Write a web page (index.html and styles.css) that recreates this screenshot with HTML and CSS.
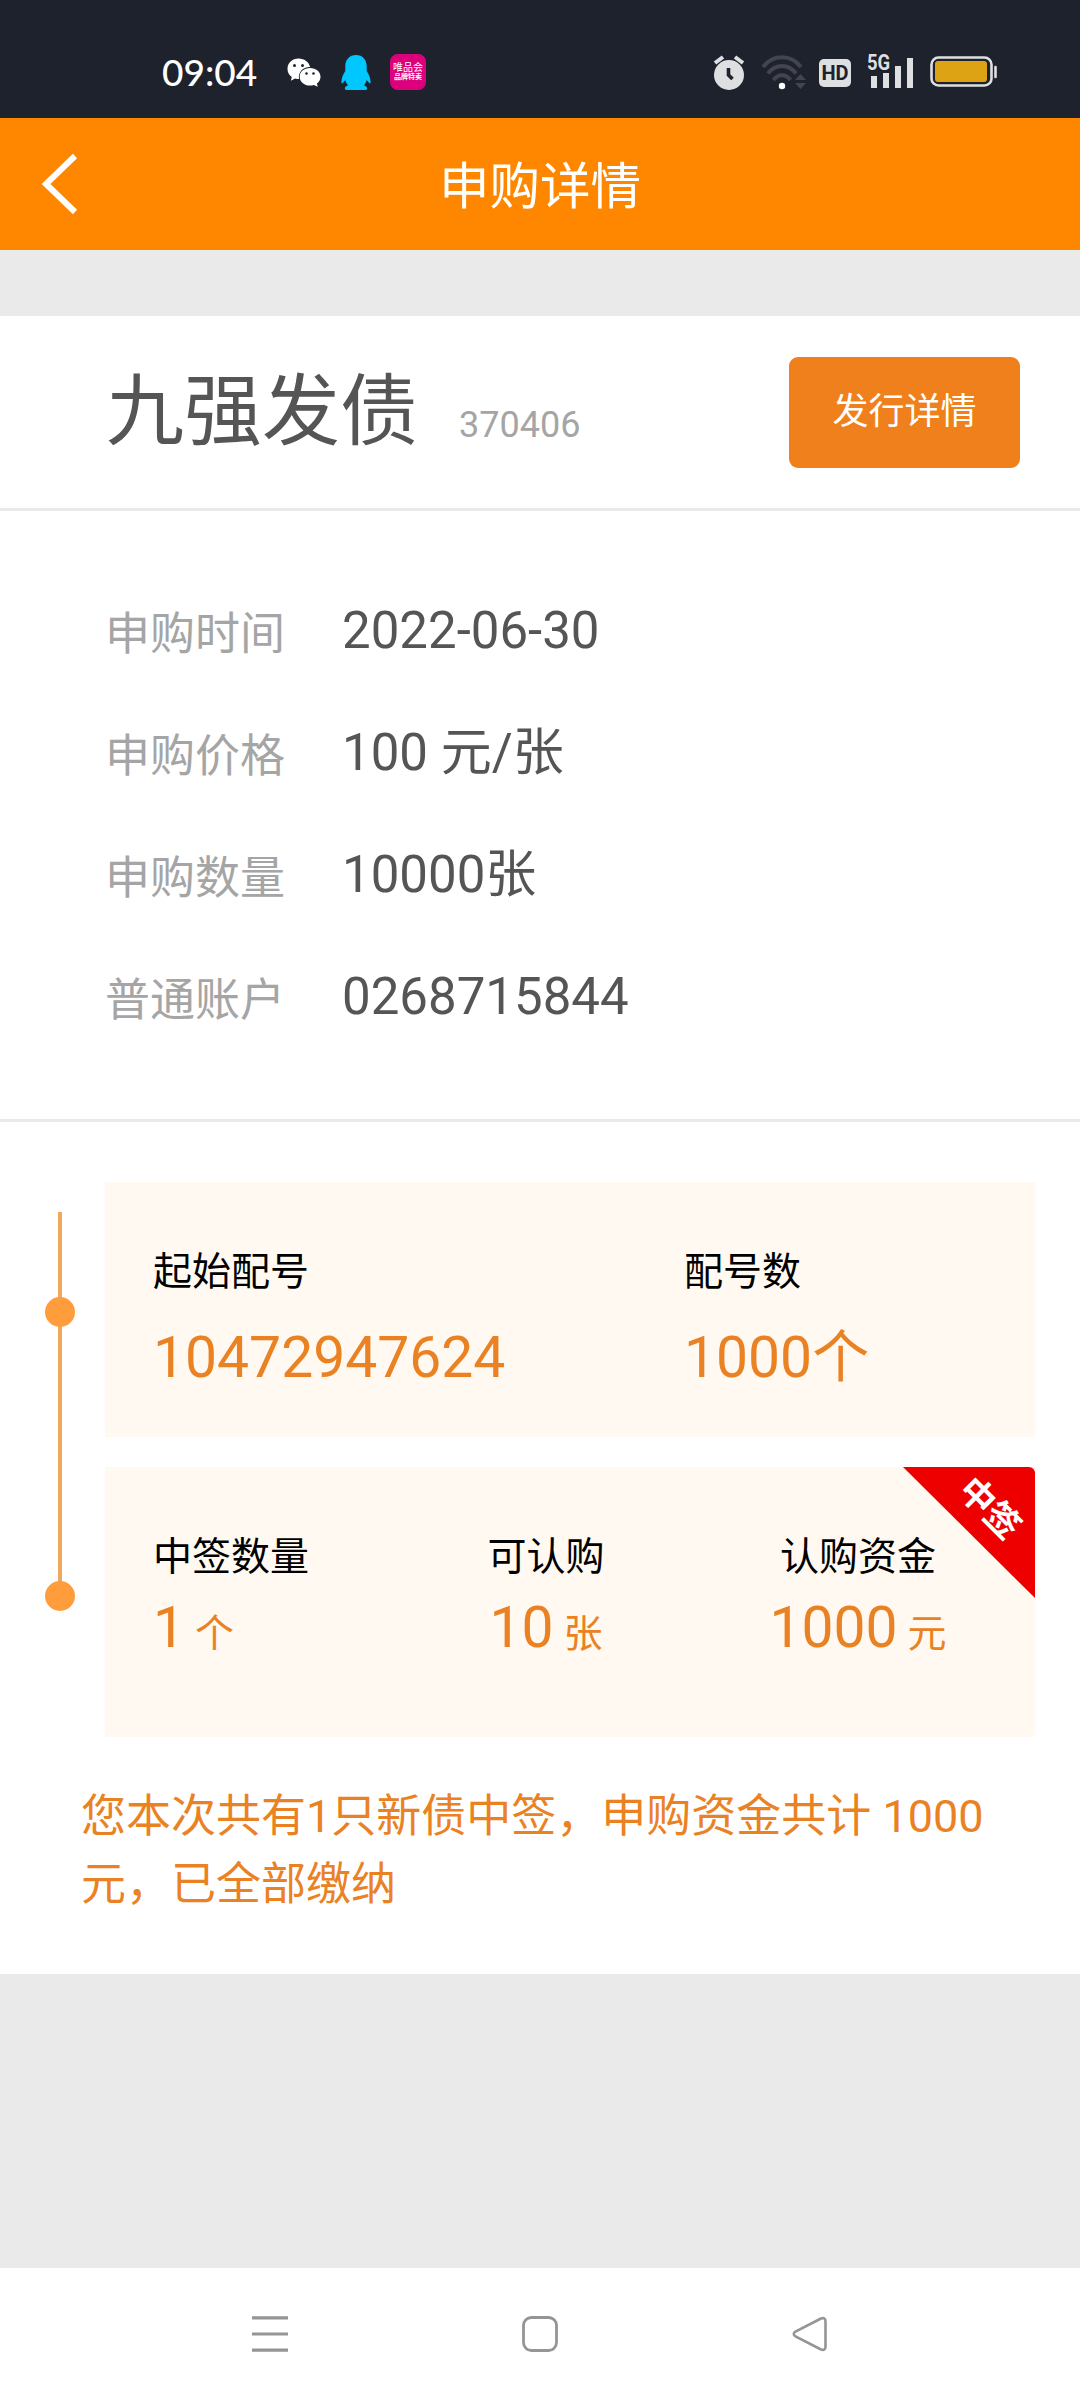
FILE: index.html
```html
<!DOCTYPE html>
<html lang="zh-CN">
<head>
<meta charset="utf-8">
<title>申购详情</title>
<link rel="stylesheet" href="styles.css">
</head>
<body>
<div class="status">
  <span class="clock">09:04</span>
  <svg class="wechat" width="34" height="29" viewBox="0 0 34 29"><path fill="#fff" d="M11.500 0.500C5.200 0.500 0.500 5 0.500 11c0 3.500 1.800 6.300 4.300 8l-1 3.700 4.300-2.200c1.300.4 2.600.6 4 .6-1.400-6.600 4-12.300 11-12.100C22 4 17.300.5 11.500.5z"/><path fill="#fff" d="M23 10c-6 0-10.300 3.900-10.300 8.700 0 5 4.300 8.800 10.300 8.800 1.400 0 2.600-.2 3.800-.6l4 1.800-.9-3.200c2.300-1.600 3.600-4 3.600-6.800C33.500 13.900 29 10 23 10z"/><g fill="#1e222d"><circle cx="7.500" cy="7.500" r="1.500"/><circle cx="15.500" cy="7.500" r="1.500"/><circle cx="19.500" cy="15.500" r="1.300"/><circle cx="26.500" cy="15.500" r="1.300"/></g></svg>
  <svg class="qq" width="30" height="35" viewBox="0 0 30 35"><path fill="#00c8ff" d="M15 0C8.500 0 4.300 4.800 4.300 11v5C2 19.500.3 23.500.4 27.300c.1 1.800 1 1.600 3.900-2.300.5 2 1.300 3.600 2.700 5.200-1.700.8-3.200 1.700-3.200 3.300 0 1.300 1 1.500 4 1.500h14.400c3 0 4-.2 4-1.500 0-1.600-1.500-2.500-3.200-3.300 1.400-1.600 2.200-3.200 2.700-5.200 2.900 3.900 3.800 4.100 3.900 2.300.1-3.800-1.600-7.800-3.900-11.300v-5C25.700 4.800 21.500 0 15 0z"/></svg>
  <div class="vip"><span class="vip-name">唯品会</span><span class="vip-sub">品牌特卖</span></div>
  <div class="indicators">
    <svg width="32" height="35" viewBox="0 0 32 35"><circle cx="16" cy="20" r="15" fill="#dedfe1"/><path d="M2 8l8-6M30 8l-8-6" stroke="#dedfe1" stroke-width="4" fill="none"/><path d="M15.500 13v7l4 4" stroke="#1e222d" stroke-width="3.600" fill="none"/></svg>
    <svg width="45" height="35" viewBox="0 0 45 35"><g fill="none" stroke="#42444f" stroke-width="4"><path d="M2 12c10-13 28-13 38 0"/><path d="M7 18.500c7.500-10 20.500-10 28 0"/><path d="M12.500 25c4.500-6.500 12.500-6.500 17 0"/></g><circle cx="21" cy="31" r="3.200" fill="#fff"/><path fill="#42444f" d="M34 25l5.500-6 5.500 6zM34 28h11l-5.500 6z"/></svg>
    <span class="hd">HD</span>
    <div class="signal"><svg width="47" height="35" viewBox="0 0 47 35"><path fill="#dedfe1" d="M4 21h6v12H4zM16 18h6v15h-6zM28 11h6v22h-6zM40 3h6v30h-6z"/></svg><span class="net">5G</span></div>
    <svg class="battery" width="68" height="32" viewBox="0 0 68 32"><rect x="1.500" y="1.500" width="60" height="28" rx="7" fill="none" stroke="#dedfe1" stroke-width="2.600"/><rect x="5" y="5" width="52" height="21" rx="3" fill="#dda315"/><path d="M65.500 11v10" stroke="#dedfe1" stroke-width="2.600" stroke-linecap="round"/></svg>
  </div>
</div>
<header class="header">
  <svg class="back" width="40" height="64" viewBox="0 0 40 64"><path d="M35 4L6 32l29 28" fill="none" stroke="#fff" stroke-width="6"/></svg>
  <h1 class="title">申购详情</h1>
</header>
<main class="page">
  <section class="bond">
    <h2 class="bond-name">九强发债</h2>
    <span class="bond-code">370406</span>
    <a class="detail-button">发行详情</a>
  </section>
  <dl class="info">
    <div class="row"><dt>申购时间</dt><dd>2022-06-30</dd></div>
    <div class="row"><dt>申购价格</dt><dd>100 元/张</dd></div>
    <div class="row"><dt>申购数量</dt><dd>10000张</dd></div>
    <div class="row"><dt>普通账户</dt><dd>0268715844</dd></div>
  </dl>
  <section class="progress">
    <div class="timeline">
      <svg width="30" height="400" viewBox="0 0 30 400"><path d="M15 0v384" stroke="#f0a85c" stroke-width="4"/><circle cx="15" cy="100" r="15" fill="#ff9d3d"/><circle cx="15" cy="384" r="15" fill="#ff9d3d"/></svg>
    </div>
    <div class="cards">
      <div class="card allot">
        <div class="cell"><span class="label">起始配号</span><span class="value">10472947624</span></div>
        <div class="cell"><span class="label">配号数</span><span class="value">1000个</span></div>
      </div>
      <div class="card result">
        <div class="cell"><span class="label">中签数量</span><span class="value">1<span class="unit">个</span></span></div>
        <div class="cell center"><span class="label">可认购</span><span class="value">10<span class="unit">张</span></span></div>
        <div class="cell center"><span class="label">认购资金</span><span class="value">1000<span class="unit">元</span></span></div>
        <div class="ribbon"><span class="ribbon-text">中签</span></div>
      </div>
    </div>
  </section>
  <p class="note">您本次共有1只新债中签，申购资金共计 1000元，已全部缴纳</p>
</main>
<nav class="nav">
  <svg width="36" height="36" viewBox="0 0 36 36"><path d="M0 1.800h36M0 18h36M0 34.200h36" stroke="#959595" stroke-width="3.200"/></svg>
  <svg width="36" height="36" viewBox="0 0 36 36"><rect x="1.500" y="1.500" width="33" height="33" rx="8" fill="none" stroke="#959595" stroke-width="2.800"/></svg>
  <svg width="36" height="36" viewBox="0 0 36 36"><path d="M29 2.500L3.500 15.500q-3.500 2.500 0 5L29 33.500q4.500 1.500 4.500-3V5.500q0-4.500-4.500-3z" fill="none" stroke="#959595" stroke-width="2.600"/></svg>
</nav>
</body>
</html>
```
FILE: styles.css
```css
* { box-sizing: border-box; margin: 0; padding: 0; }
body {
  width: 1080px;
  height: 2400px;
  display: flex;
  flex-direction: column;
  background: #eaeaea;
  font-family: Roboto, "Noto Sans CJK SC", sans-serif;
  color: #555;
}
h1, h2 { font-weight: 400; }
svg { display: block; flex: none; }

.status {
  height: 118px;
  padding: 26px 82px 0 162px;
  display: flex;
  align-items: center;
  background: #1e222d;
  color: #fff;
}
.clock { width: 125px; font: 500 37px/44px Lato, sans-serif; }
.wechat { margin-right: 20px; }
.qq { margin-right: 19px; }
.vip {
  width: 36px;
  height: 36px;
  border-radius: 8px;
  background: #dc007c;
  display: flex;
  flex-direction: column;
  align-items: center;
  justify-content: center;
}
.vip-name { font-size: 10px; line-height: 11px; }
.vip-sub { font-size: 7px; line-height: 9px; font-weight: 700; }
.indicators { margin-left: auto; display: flex; align-items: center; }
.indicators > :first-child { margin-right: 16px; }
.hd {
  width: 32px;
  height: 28px;
  margin: 1px 16px 0 13px;
  border-radius: 5px;
  background: #dedfe1;
  color: #1e222d;
  font: 700 20px/29px Roboto, sans-serif;
  text-align: center;
}
.signal { position: relative; margin-right: 16px; }
.net {
  position: absolute;
  left: 0;
  top: -3px;
  font: 700 22px/22px Roboto, sans-serif;
  color: #dedfe1;
  text-shadow: 0 0 2px #1e222d, 0 1px 1px #1e222d;
  transform: scaleX(0.84);
  transform-origin: left;
}

.header {
  height: 132px;
  padding-left: 40px;
  display: grid;
  grid-template-columns: 40px 1fr 80px;
  align-items: center;
  background: #ff8700;
  color: #fff;
}
.title { padding-top: 6px; font-size: 50.5px; line-height: 60px; text-align: center; }

.page { margin-top: 66px; height: 1658px; background: #fff; }
.bond {
  height: 195px;
  padding: 0 60px 0 106px;
  display: flex;
  align-items: flex-start;
  border-bottom: 3px solid #eaeaea;
}
.bond-name { font-size: 78px; line-height: 194px; }
.bond-code { margin-left: 41px; font-size: 36px; line-height: 218px; color: #a5a5a5; }
.detail-button {
  width: 231px;
  height: 111px;
  margin: 41px 0 0 auto;
  border-radius: 9px;
  background: #ef801c;
  color: #fff;
  font-size: 36px;
  line-height: 111px;
  text-align: center;
}

.info { height: 611px; padding: 59px 0 0 105px; border-bottom: 3px solid #eaeaea; }
.row { height: 122px; display: flex; align-items: flex-start; line-height: 122px; }
.row dt { width: 237px; padding-top: 4px; font-size: 45px; color: #a5a5a5; }
.row dd { font-size: 51px; }

.progress { display: flex; padding-top: 60px; }
.timeline { width: 105px; padding: 30px 0 0 45px; }
.cards { width: 930px; display: flex; flex-direction: column; gap: 30px; }
.card { background: #fff9f2; color: #000; display: grid; }
.allot { height: 255px; padding: 62px 0 0 48px; grid-template-columns: 531px 1fr; }
.result {
  position: relative;
  height: 270px;
  padding: 62px 20px 0 48px;
  grid-template-columns: 238px 310px 1fr;
}
.cell { display: flex; flex-direction: column; }
.center { align-items: center; }
.label { font-size: 39px; line-height: 56px; }
.value { font-size: 57px; line-height: 66px; color: #ea8223; }
.allot .value { margin-top: 25px; }
.result .value { margin-top: 10px; }
.unit { margin-left: 10px; font-size: 39px; }
.ribbon {
  position: absolute;
  top: 0;
  right: 0;
  width: 132px;
  height: 131px;
  border-top-right-radius: 6px;
  background: #ee0000;
  clip-path: polygon(0 0, 100% 0, 100% 100%);
}
.ribbon-text {
  position: absolute;
  left: 50px;
  top: 21px;
  width: 72px;
  color: #fff;
  font-size: 35px;
  line-height: 42px;
  font-weight: 700;
  text-align: center;
  transform: rotate(45deg);
}

.note { padding: 46px 80px 0 81px; font-size: 45px; line-height: 67.5px; color: #ea8223; }

.nav {
  height: 132px;
  margin-top: auto;
  padding: 0 252px;
  display: flex;
  align-items: center;
  justify-content: space-between;
  background: #fff;
}
```
